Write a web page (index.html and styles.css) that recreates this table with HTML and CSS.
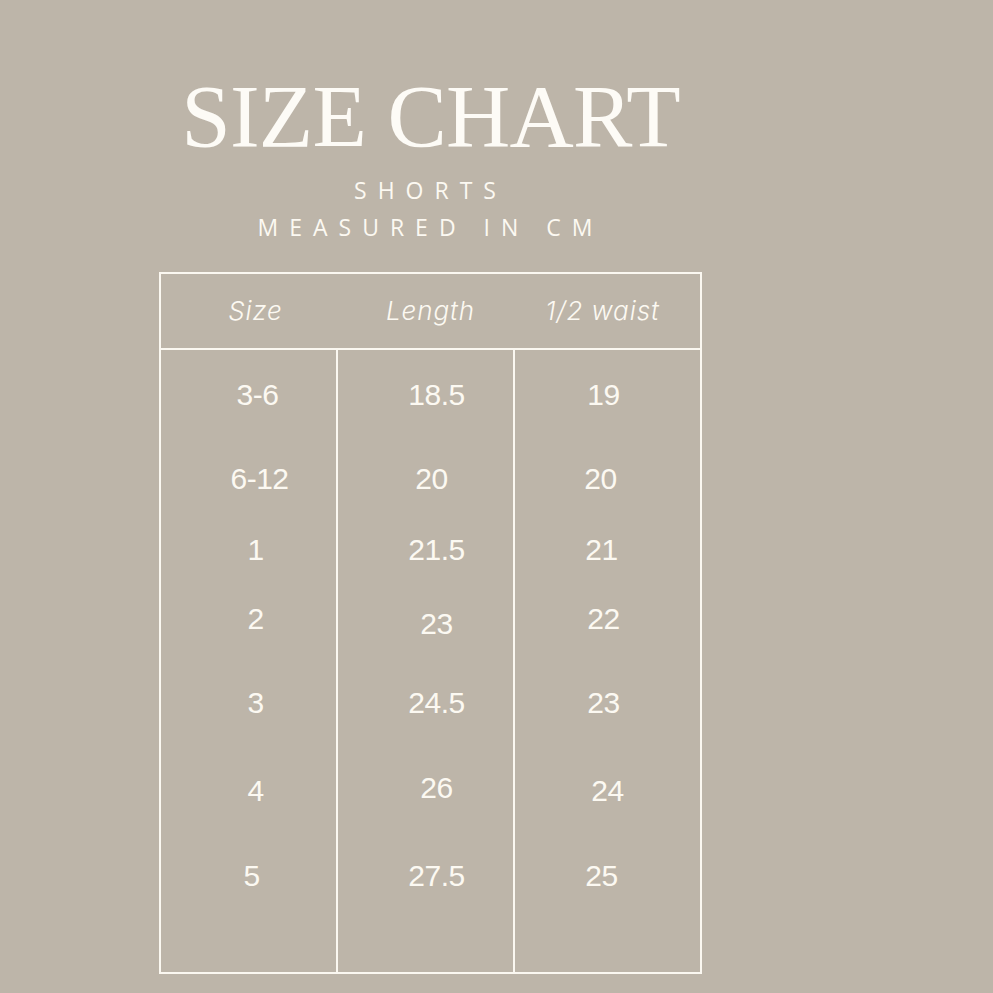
FILE: index.html
```html
<!DOCTYPE html>
<html lang="en">
<head>
<meta charset="utf-8">
<title>Size Chart</title>
<link rel="stylesheet" href="styles.css">
</head>
<body>
<main class="page">
  <header class="heading">
    <h1 class="title">SIZE CHART</h1>
    <p class="sub">SHORTS</p>
    <p class="sub">MEASURED IN CM</p>
  </header>
  <section class="chart">
    <div class="head">
      <div class="hcell c1">Size</div>
      <div class="hcell c2">Length</div>
      <div class="hcell c3">1/2 waist</div>
    </div>
    <div class="body">
      <div class="col c1">
        <div class="cell r2">3-6</div>
        <div class="cell r4">6-12</div>
        <div class="cell">1</div>
        <div class="cell">2</div>
        <div class="cell">3</div>
        <div class="cell">4</div>
        <div class="cell l4">5</div>
      </div>
      <div class="col c2">
        <div class="cell">18.5</div>
        <div class="cell l5">20</div>
        <div class="cell">21.5</div>
        <div class="cell d5">23</div>
        <div class="cell">24.5</div>
        <div class="cell u3">26</div>
        <div class="cell">27.5</div>
      </div>
      <div class="col c3">
        <div class="cell">19</div>
        <div class="cell l3">20</div>
        <div class="cell l2">21</div>
        <div class="cell">22</div>
        <div class="cell">23</div>
        <div class="cell r4">24</div>
        <div class="cell l2">25</div>
      </div>
    </div>
  </section>
</main>
</body>
</html>
```

FILE: styles.css
```css
html, body {
  margin: 0;
  padding: 0;
  background: #bdb5a9;
}
body {
  width: 993px;
  height: 993px;
  overflow: hidden;
  color: #fcf9f2;
}
.page {
  width: 543px;
  margin-left: 159px;
  padding-top: 71px;
}
.heading {
  text-align: center;
}
.title {
  margin: 0;
  font-family: "Liberation Serif", "DejaVu Serif", serif;
  font-weight: 400;
  font-size: 89px;
  line-height: 90px;
  letter-spacing: -0.8px;
  color: #fdfbf6;
}
.sub {
  margin: 0;
  font-family: "Open Sans", "Liberation Sans", sans-serif;
  font-size: 23px;
  line-height: 37px;
  letter-spacing: 11px;
}
.title + .sub {
  margin-top: 11px;
}
.chart {
  margin-top: 26px;
  border: 2px solid #fbf8f1;
  box-sizing: border-box;
  width: 543px;
  height: 702px;
  display: flex;
  flex-direction: column;
}
.head {
  height: 76px;
  display: grid;
  grid-template-columns: 175px 177px 187px;
  align-items: center;
  border-bottom: 2px solid #fbf8f1;
  font-family: "Inter", "Liberation Sans", sans-serif;
  font-style: italic;
  font-weight: 300;
  font-size: 26px;
  letter-spacing: 0.9px;
  padding-bottom: 2px;
  box-sizing: border-box;
  flex: none;
}
.hcell {
  text-align: center;
}
.head .c1 { padding-left: 14px; }
.head .c2 { padding-left: 12px; }
.head .c3 { padding-right: 8px; }
.body {
  flex: 1;
  display: grid;
  grid-template-columns: 175px 177px 187px;
  font-family: "Liberation Sans", Arial, sans-serif;
  font-size: 30px;
  letter-spacing: -0.5px;
}
.col {
  padding-top: 27px;
  display: flex;
  flex-direction: column;
}
.body .c2, .body .c3 {
  border-left: 2px solid #fbf8f1;
}
.body .c1 { padding-left: 14px; }
.body .c2 { padding-left: 22px; }
.body .c3 { padding-right: 8px; }
.cell {
  text-align: center;
  line-height: 36px;
  height: 84px;
  flex: none;
}
.cell:nth-child(2) { height: 71px; }
.cell:nth-child(3) { height: 69px; }
.cell:nth-child(4) { height: 84px; }
.cell:nth-child(5) { height: 88px; }
.cell:nth-child(6) { height: 85px; }
.cell:nth-child(7) { height: 36px; }
.r2 { transform: translateX(2px); }
.r4 { transform: translateX(4px); }
.l2 { transform: translateX(-2px); }
.l3 { transform: translateX(-3px); }
.l4 { transform: translateX(-4px); }
.l5 { transform: translateX(-5px); }
.d5 { transform: translateY(5px); }
.u3 { transform: translateY(-3px); }
```
